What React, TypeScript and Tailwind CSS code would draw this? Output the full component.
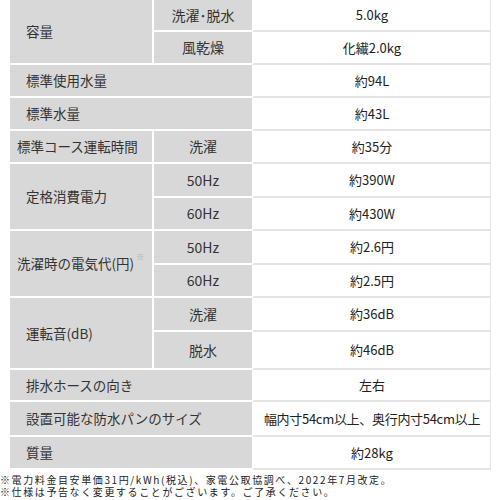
import React from 'react';

const gray = 'bg-[#d9d8d8] border-b-2 border-white flex items-center text-[13.5px] text-[#333]';
const sub = 'bg-[#d9d8d8] border-b-2 border-l-2 border-white flex items-center justify-center text-[14px] text-[#333]';
const val = 'bg-white border-b-2 border-l-2 border-r border-[#e4e4e4] border-l-white flex items-center justify-center text-[13px] text-[#222]';

export default function App() {
  return (
    <div className="w-[500px] h-[500px] bg-white overflow-hidden font-['Noto_Sans_CJK_JP','Noto_Sans',sans-serif]">
      {/* Spec table */}
      <div className="ml-[10px] w-[481px] grid grid-cols-[142px_100px_239px] grid-rows-[32px_33px_33px_33px_33px_34px_33px_34px_33px_34px_38px_32px_35px_33px]">
        <div className={`${gray} row-span-2 pl-4`}>容量</div>
        <div className={sub}>洗濯･脱水</div>
        <div className={val}>5.0kg</div>
        <div className={sub}>風乾燥</div>
        <div className={val}>化繊2.0kg</div>

        <div className={`${gray} col-span-2 pl-4`}>標準使用水量</div>
        <div className={val}>約94L</div>

        <div className={`${gray} col-span-2 pl-4`}>標準水量</div>
        <div className={val}>約43L</div>

        <div className={`${gray} pl-[7px]`}>標準コース運転時間</div>
        <div className={sub}>洗濯</div>
        <div className={val}>約35分</div>

        <div className={`${gray} row-span-2 pl-4`}>定格消費電力</div>
        <div className={sub}>50Hz</div>
        <div className={val}>約390W</div>
        <div className={sub}>60Hz</div>
        <div className={val}>約430W</div>

        <div className={`${gray} row-span-2 pl-[7px]`}>
          洗濯時の電気代(円)
          <span className="text-[8px] text-[#aaa] self-start mt-[20px] ml-[2px]">※</span>
        </div>
        <div className={sub}>50Hz</div>
        <div className={val}>約2.6円</div>
        <div className={sub}>60Hz</div>
        <div className={val}>約2.5円</div>

        <div className={`${gray} row-span-2 pl-4`}>運転音(dB)</div>
        <div className={sub}>洗濯</div>
        <div className={val}>約36dB</div>
        <div className={sub}>脱水</div>
        <div className={val}>約46dB</div>

        <div className={`${gray} col-span-2 pl-4`}>排水ホースの向き</div>
        <div className={val}>左右</div>

        <div className={`${gray} col-span-2 pl-4`}>設置可能な防水パンのサイズ</div>
        <div className={`${val} tracking-[-0.3px]`}>幅内寸54cm以上、奥行内寸54cm以上</div>

        <div className={`${gray} col-span-2 pl-4 border-b-0`}>質量</div>
        <div className={`${val} border-b-0`}>約28kg</div>
      </div>

      {/* Notes */}
      <div className="mt-[4px] text-[10px] leading-[11.5px] tracking-[1.6px] text-[#222]">
        <p>※電力料金目安単価31円/kWh(税込)、家電公取協調べ、2022年7月改定。</p>
        <p>※仕様は予告なく変更することがございます。ご了承ください。</p>
      </div>
    </div>
  );
}
